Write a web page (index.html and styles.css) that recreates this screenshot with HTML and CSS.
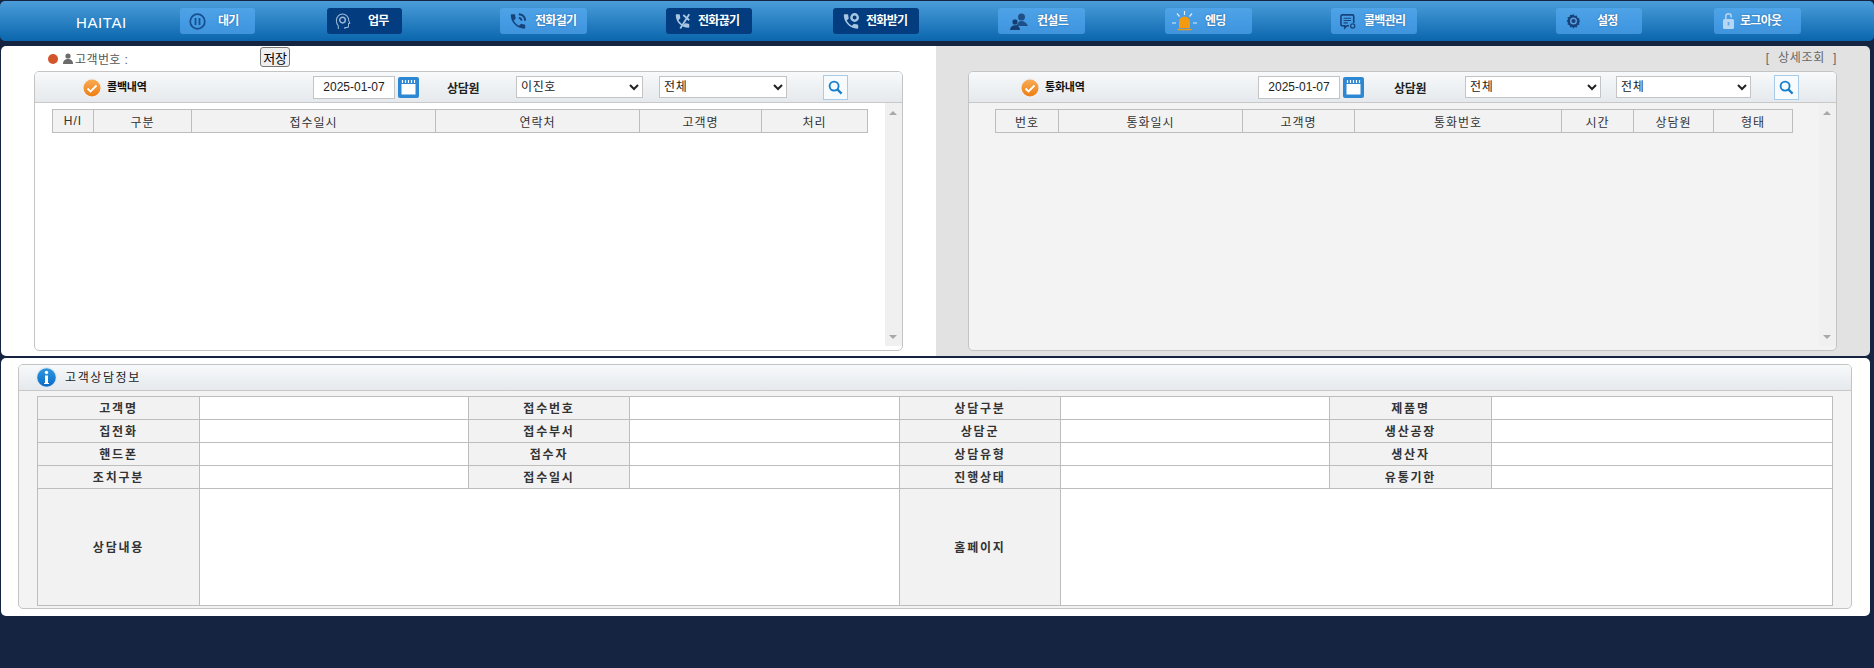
FILE: index.html
```html
<!DOCTYPE html>
<html lang="ko">
<head>
<meta charset="utf-8">
<title>HAITAI</title>
<link rel="stylesheet" href="styles.css">
</head>
<body>
<header class="topbar">
  <div class="brand">HAITAI</div>
  <nav class="nav">
    <a class="nb nb-wait">
      <svg class="ni i17" viewBox="0 0 17 17"><circle cx="8.500" cy="8.500" r="7.300" fill="none" stroke="#17508f" stroke-width="1.800"/><path d="M6.500 5v7M10.500 5v7" stroke="#17508f" stroke-width="1.800"/></svg>
      <span>대기</span>
    </a>
    <a class="nb nb-work on">
      <svg class="ni i16" viewBox="0 0 16 18"><path d="M3 17v-3.500C1.500 12 1 10.500 1 8c0-4 3-7 6.500-7S14 4 14 7.500c0 1 .8 2.300 1.200 3.200l-1.400.6V14c0 1-.7 1.400-1.600 1.400H10V17" fill="none" stroke="#9db9d6" stroke-width="1.100"/><circle cx="7.500" cy="7.500" r="3" fill="none" stroke="#9db9d6" stroke-width="1.500"/></svg>
      <span>업무</span>
    </a>
    <a class="nb nb-call">
      <svg class="ni i16" viewBox="2 2 20 20"><path fill="#17437d" d="M6.600 10.800c1.400 2.800 3.800 5.100 6.600 6.600l2.200-2.200c.3-.3.700-.4 1-.2 1.100.4 2.300.6 3.600.6.600 0 1 .4 1 1V20c0 .6-.4 1-1 1C10.600 21 3 13.400 3 4c0-.6.400-1 1-1h3.500c.6 0 1 .4 1 1 0 1.300.2 2.500.6 3.600.1.300 0 .7-.2 1z"/><path fill="none" stroke="#17437d" stroke-width="2.400" d="M13 3c4.500.3 7.700 3.500 8 8M13 7.500c2 .2 3.300 1.500 3.500 3.500"/></svg>
      <span>전화걸기</span>
    </a>
    <a class="nb nb-hang on">
      <svg class="ni i15" viewBox="2 2 20 20"><path fill="#a9c6e2" d="M6.600 10.800c1.400 2.800 3.800 5.100 6.600 6.600l2.200-2.200c.3-.3.700-.4 1-.2 1.100.4 2.300.6 3.600.6.600 0 1 .4 1 1V20c0 .6-.4 1-1 1C10.600 21 3 13.400 3 4c0-.6.400-1 1-1h3.500c.6 0 1 .4 1 1 0 1.300.2 2.500.6 3.600.1.300 0 .7-.2 1z"/><path stroke="#a9c6e2" stroke-width="2.400" d="M13 4l8 7M21 3L9 22"/></svg>
      <span>전화끊기</span>
    </a>
    <a class="nb nb-recv on">
      <svg class="ni i16" viewBox="2 2 20 20"><path fill="#a9c6e2" d="M6.600 10.800c1.400 2.800 3.800 5.100 6.600 6.600l2.200-2.200c.3-.3.700-.4 1-.2 1.100.4 2.300.6 3.600.6.600 0 1 .4 1 1V20c0 .6-.4 1-1 1C10.600 21 3 13.400 3 4c0-.6.400-1 1-1h3.500c.6 0 1 .4 1 1 0 1.300.2 2.500.6 3.600.1.300 0 .7-.2 1z"/><circle cx="16.500" cy="7" r="4" fill="none" stroke="#a9c6e2" stroke-width="3"/></svg>
      <span>전화받기</span>
    </a>
    <a class="nb nb-cons">
      <svg class="ni i20" viewBox="0 0 20 17"><circle cx="12.500" cy="4" r="3.500" fill="#1f4f87"/><path d="M7 13c.5-3 3-5 5.500-5s5.500 2 6.500 5z" fill="#1f4f87"/><circle cx="6" cy="9" r="3" fill="#153f73" stroke="#4a9fe2" stroke-width=".6"/><path d="M1 17c.2-3 2.200-4.800 5-4.800s5 1.800 5 4.800z" fill="#153f73"/></svg>
      <span>컨설트</span>
    </a>
    <a class="nb nb-end">
      <svg class="ni i25" viewBox="0 0 25 22"><path d="M7 18v-6a5.500 5.500 0 0 1 11 0v6z" fill="#f59a0e"/><path d="M5.500 19.500h14" stroke="#f59a0e" stroke-width="1.500"/><path d="M12.500 1v4M5 3.500l2.500 3M20 3.500l-2.500 3M0 13h4M21 13h4" stroke="#dcecf9" stroke-width="1.200"/></svg>
      <span>엔딩</span>
    </a>
    <a class="nb nb-cb">
      <svg class="ni i16" viewBox="0 0 17 16"><path d="M9.500 12.500H7.500L5 14.800v-2.300H2.300c-.8 0-1.300-.5-1.300-1.300V2.300C1 1.500 1.500 1 2.300 1h11c.8 0 1.300.5 1.300 1.300v7.200" fill="none" stroke="#17437d" stroke-width="1.700"/><path d="M3.800 4.500h8M3.800 7h8M3.800 9.500h4.500" stroke="#17437d" stroke-width="1.200"/><circle cx="13.500" cy="12.800" r="2.200" fill="none" stroke="#17437d" stroke-width="1.300"/></svg>
      <span>콜백관리</span>
    </a>
    <a class="nb nb-set">
      <svg class="ni i15" viewBox="0 0 16 16"><path d="M8 .6l1.200 2 2.300-.4.700 2.200 2.200.8-.5 2.300L15.400 8l-1.500 1.500.5 2.300-2.200.8-.7 2.200-2.300-.4-1.200 1.900-1.200-1.900-2.300.4-.7-2.200-2.200-.8.5-2.300L.6 8l1.500-1.500-.5-2.300 2.200-.8.700-2.200 2.300.4z" fill="#17437d"/><circle cx="8" cy="8" r="3" fill="none" stroke="#5b9fdc" stroke-width="1.500"/></svg>
      <span>설정</span>
    </a>
    <a class="nb nb-out">
      <svg class="ni i11" viewBox="0 0 11 16"><rect x="0" y="6" width="11" height="10" rx="1.500" fill="#b6d6f2"/><path d="M2.800 6.500V3.500a2.700 2.700 0 0 1 5.400 0V4.500" fill="none" stroke="#b6d6f2" stroke-width="1.500"/><rect x="4.700" y="9" width="1.600" height="3.500" fill="#5ea8e8"/></svg>
      <span>로그아웃</span>
    </a>
  </nav>
</header>

<main class="page">
  <div class="upper">
    <section class="pane pane-left">
      <div class="cust-row">
        <i class="dot"></i>
        <svg class="user" viewBox="0 0 10 11"><circle cx="5" cy="3" r="2.600" fill="#6b6b6b"/><path d="M0 11c0-3.500 2-5 5-5s5 1.500 5 5z" fill="#6b6b6b"/></svg>
        <span class="cust-label">고객번호 :</span>
        <button class="save" type="button">저장</button>
      </div>
      <div class="box box-left">
        <div class="box-head">
          <svg class="check check-l" viewBox="0 0 20 20"><defs><linearGradient id="og1" x1="0" y1="0" x2="0" y2="1"><stop offset="0" stop-color="#f8ac55"/><stop offset="1" stop-color="#ee7d12"/></linearGradient></defs><circle cx="10" cy="10" r="10" fill="#eef0f2"/><circle cx="10" cy="10" r="8.500" fill="url(#og1)"/><path d="M5.500 10.500l3 3 6-6" fill="none" stroke="#fff" stroke-width="1.800"/></svg>
          <span class="box-title tl">콜백내역</span>
          <input class="date" type="text" value="2025-01-07">
          <svg class="cal" viewBox="0 0 21 21"><rect width="21" height="21" rx="2" fill="#2d87d3"/><rect x="3.500" y="7" width="14" height="10.500" fill="#fff"/><path d="M4.500 3v3M7.500 3v3M10.500 3v3M13.500 3v3M16.500 3v3" stroke="#fff" stroke-width="1.200"/></svg>
          <span class="agent al">상담원</span>
          <select class="sel sel-l1"><option>이진호</option></select>
          <select class="sel sel-l2"><option>전체</option></select>
          <button class="search sr-l" type="button"><svg viewBox="0 0 16 16"><circle cx="6.500" cy="6.500" r="4.800" fill="none" stroke="#1780cc" stroke-width="2"/><path d="M10 10l4.500 4.500" stroke="#1780cc" stroke-width="2.400"/></svg></button>
        </div>
        <div class="box-body">
          <div class="tbl-wrap wrap-left">
            <table class="grid grid-left">
              <colgroup><col class="c41"><col class="c98"><col class="c244"><col class="c204"><col class="c122"><col class="c106"></colgroup>
              <thead><tr><th>H/I</th><th>구분</th><th>접수일시</th><th>연락처</th><th>고객명</th><th>처리</th></tr></thead>
            </table>
          </div>
          <div class="scroll"><i class="up"></i><i class="down"></i></div>
        </div>
      </div>
    </section>

    <section class="pane pane-right">
      <div class="detail-row">[ &nbsp;상세조회 &nbsp;]</div>
      <div class="box box-right">
        <div class="box-head">
          <svg class="check check-r" viewBox="0 0 20 20"><defs><linearGradient id="og2" x1="0" y1="0" x2="0" y2="1"><stop offset="0" stop-color="#f8ac55"/><stop offset="1" stop-color="#ee7d12"/></linearGradient></defs><circle cx="10" cy="10" r="10" fill="#eef0f2"/><circle cx="10" cy="10" r="8.500" fill="url(#og2)"/><path d="M5.500 10.500l3 3 6-6" fill="none" stroke="#fff" stroke-width="1.800"/></svg>
          <span class="box-title tr">통화내역</span>
          <input class="date" type="text" value="2025-01-07">
          <svg class="cal" viewBox="0 0 21 21"><rect width="21" height="21" rx="2" fill="#2d87d3"/><rect x="3.500" y="7" width="14" height="10.500" fill="#fff"/><path d="M4.500 3v3M7.500 3v3M10.500 3v3M13.500 3v3M16.500 3v3" stroke="#fff" stroke-width="1.200"/></svg>
          <span class="agent ar">상담원</span>
          <select class="sel sel-r1"><option>전체</option></select>
          <select class="sel sel-r2"><option>전체</option></select>
          <button class="search sr-r" type="button"><svg viewBox="0 0 16 16"><circle cx="6.500" cy="6.500" r="4.800" fill="none" stroke="#1780cc" stroke-width="2"/><path d="M10 10l4.500 4.500" stroke="#1780cc" stroke-width="2.400"/></svg></button>
        </div>
        <div class="box-body">
          <div class="tbl-wrap wrap-right">
            <table class="grid grid-right">
              <colgroup><col class="c63"><col class="c184"><col class="c112"><col class="c207"><col class="c72"><col class="c80"><col class="c79"></colgroup>
              <thead><tr><th>번호</th><th>통화일시</th><th>고객명</th><th>통화번호</th><th>시간</th><th>상담원</th><th>형태</th></tr></thead>
            </table>
          </div>
          <div class="scroll"><i class="up"></i><i class="down"></i></div>
        </div>
      </div>
    </section>
  </div>

  <section class="lower">
    <div class="info-box">
      <div class="info-head">
        <svg class="info-ic" viewBox="0 0 21 21"><defs><linearGradient id="bl1" x1="0" y1="0" x2="0" y2="1"><stop offset="0" stop-color="#2f97e2"/><stop offset="1" stop-color="#0a6cc4"/></linearGradient></defs><circle cx="10.500" cy="10.500" r="10.500" fill="#e0e9f0"/><circle cx="10.500" cy="10.500" r="9.300" fill="url(#bl1)"/><circle cx="10.500" cy="5.500" r="1.700" fill="#fff"/><path d="M9 8.500h3v7.500h1v1H8v-1h1z" fill="#fff"/></svg>
        <span class="info-title">고객상담정보</span>
      </div>
      <table class="form">
        <colgroup><col class="f162"><col class="f269"><col class="f161"><col class="f270"><col class="f161"><col class="f269"><col class="f162"><col class="f341"></colgroup>
        <tbody>
          <tr><th>고객명</th><td></td><th>접수번호</th><td></td><th>상담구분</th><td></td><th>제품명</th><td></td></tr>
          <tr><th>집전화</th><td></td><th>접수부서</th><td></td><th>상담군</th><td></td><th>생산공장</th><td></td></tr>
          <tr><th>핸드폰</th><td></td><th>접수자</th><td></td><th>상담유형</th><td></td><th>생산자</th><td></td></tr>
          <tr><th>조치구분</th><td></td><th>접수일시</th><td></td><th>진행상태</th><td></td><th>유통기한</th><td></td></tr>
          <tr class="tall"><th>상담내용</th><td colspan="3"></td><th>홈페이지</th><td colspan="3"></td></tr>
        </tbody>
      </table>
    </div>
  </section>
</main>
</body>
</html>
```

FILE: styles.css
```css
* { box-sizing: border-box; }
html, body { height: 668px; overflow: hidden; }
body {
  margin: 0;
  background: #152440;
  font-family: "Liberation Sans", "Noto Sans CJK KR", sans-serif;
  font-size: 12px;
  color: #333;
}

/* top bar */
.topbar {
  display: flex;
  align-items: flex-start;
  height: 40px;
  margin: 1px 0 5px;
  border-radius: 5px;
  background: linear-gradient(#4b9dd9, #0a66ad);
}
.brand {
  width: 180px;
  padding: 13px 0 0 76px;
  color: #fff;
  font-size: 15px;
  line-height: 17px;
  letter-spacing: .6px;
}
.nav { display: flex; padding-top: 7px; }
.nb {
  display: flex;
  align-items: center;
  width: 86px;
  height: 26px;
  border-radius: 3px;
  background: linear-gradient(#4fa3e6, #449be3 60%, #3f93db);
  color: #fff;
  font-size: 12px;
  font-weight: 700;
  letter-spacing: -.7px;
  line-height: 14px;
  text-shadow: 0 0 2px rgba(0, 40, 90, .5);
  white-space: nowrap;
}
.nb.on { background: #033d80; }
.ni { flex: none; display: block; }
.i11 { width: 11px; height: 16px; }
.i15 { width: 15px; height: 16px; }
.i16 { width: 16px; height: 17px; }
.i17 { width: 17px; height: 17px; }
.i20 { width: 20px; height: 17px; }
.i25 { width: 25px; height: 22px; }
.nb-wait { width: 75px; padding-left: 9px; }
.nb-wait span { margin-left: 12px; }
.nb-work { width: 75px; margin-left: 72px; padding-left: 8px; }
.nb-work span { margin-left: 17px; }
.nb-call { width: 87px; margin-left: 98px; padding-left: 10px; }
.nb-call span { margin-left: 9px; }
.nb-hang { margin-left: 79px; padding-left: 9px; }
.nb-hang span { margin-left: 8px; }
.nb-recv { margin-left: 81px; padding-left: 10px; }
.nb-recv span { margin-left: 7px; }
.nb-cons { width: 87px; margin-left: 79px; padding-left: 11px; }
.nb-cons span { margin-left: 8px; }
.nb-end { width: 87px; margin-left: 80px; padding-left: 7px; }
.nb-end span { margin-left: 8px; }
.nb-cb { margin-left: 79px; padding-left: 9px; }
.nb-cb span { margin-left: 8px; }
.nb-set { margin-left: 139px; padding-left: 10px; }
.nb-set span { margin-left: 16px; }
.nb-out { width: 87px; margin-left: 72px; padding-left: 9px; }
.nb-out span { margin-left: 6px; }

/* page */
.page { margin-left: 1px; width: 1869px; }
.upper { display: flex; height: 310px; }
.pane { height: 310px; }
.pane-left {
  width: 935px;
  padding-left: 33px;
  background: #fff;
  border-radius: 5px 0 0 5px;
}
.pane-right {
  width: 934px;
  padding-left: 32px;
  background: #e2e2e2;
  border-radius: 0 5px 5px 0;
}
.cust-row {
  display: flex;
  align-items: center;
  height: 25px;
  padding-left: 14px;
}
.dot {
  width: 10px;
  height: 10px;
  border-radius: 50%;
  background: #d4552a;
}
.user { width: 10px; height: 11px; margin-left: 5px; }
.cust-label {
  width: 185px;
  margin-left: 2px;
  color: #555;
  font-size: 12px;
  letter-spacing: .4px;
}
.save {
  width: 30px;
  height: 20px;
  margin: 0 0 3px;
  padding: 0;
  border: 1px solid #767676;
  border-radius: 3px;
  background: #efefef;
  color: #000;
  font: 13px "Liberation Sans", "Noto Sans CJK KR", sans-serif;
  letter-spacing: -.3px;
}
.detail-row {
  width: 869px;
  height: 25px;
  text-align: right;
  color: #666;
  font-size: 12px;
  line-height: 25px;
  letter-spacing: .7px;
}

/* panels */
.box {
  height: 280px;
  border: 1px solid #c4c4c4;
  border-radius: 5px;
  overflow: hidden;
}
.box-left { width: 869px; background: #fff; }
.box-right { width: 869px; background: #f3f3f3; }
.box-head {
  display: flex;
  align-items: center;
  height: 31px;
  border-bottom: 1px solid #c8c8c8;
  background: linear-gradient(#f7f9fa, #e5e9ed);
}
.check { width: 20px; height: 20px; flex: none; margin-top: 1px; }
.check-l { margin-left: 47px; }
.check-r { margin-left: 51px; }
.box-title {
  margin-left: 5px;
  margin-bottom: 3px;
  color: #111;
  font-size: 11px;
  font-weight: 700;
  letter-spacing: -.2px;
}
.tl { width: 206px; }
.tr { width: 213px; }
.date {
  width: 82px;
  height: 23px;
  padding: 0;
  border: 1px solid #c4c4c4;
  background: #fff;
  color: #222;
  font: 12px "Liberation Sans", sans-serif;
  text-align: center;
}
.cal { width: 21px; height: 21px; margin-left: 3px; flex: none; }
.agent { width: 34px; font-size: 12px; font-weight: 700; letter-spacing: -.3px; color: #222; white-space: nowrap; }
.al { margin-left: 28px; }
.ar { margin-left: 30px; }
.sel {
  height: 22px;
  padding: 0;
  border: 1px solid #c4c4c4;
  border-radius: 0;
  background-color: #fff;
  color: #222;
  font: 12px "Liberation Sans", "Noto Sans CJK KR", sans-serif;
  letter-spacing: .6px;
}
.sel-l1 { width: 127px; margin-left: 35px; }
.sel-l2 { width: 128px; margin-left: 16px; }
.sel-r1 { width: 136px; margin-left: 37px; }
.sel-r2 { width: 135px; margin-left: 15px; }
.search {
  width: 25px;
  height: 25px;
  padding: 4px;
  border: 1px solid #a8cbe8;
  background: #f8fbfd;
}
.search svg { display: block; width: 15px; height: 15px; }
.sr-l { margin-left: 36px; }
.sr-r { margin-left: 23px; }
.box-body { display: flex; height: 247px; }
.tbl-wrap { padding-top: 6px; }
.wrap-left { width: 850px; padding-left: 17px; }
.wrap-right { width: 850px; padding-left: 26px; }
.scroll {
  position: relative;
  width: 17px;
  height: 243px;
  background: #f0f0f0;
}
.up, .down {
  position: absolute;
  left: 4px;
  width: 0;
  height: 0;
  border-left: 4px solid transparent;
  border-right: 4px solid transparent;
}
.up { top: 8px; border-bottom: 4px solid #a8a8a8; }
.down { bottom: 7px; border-top: 4px solid #a8a8a8; }

/* list tables */
.grid { border-collapse: collapse; table-layout: fixed; }
.grid-left { width: 815px; }
.grid-right { width: 797px; }
.grid th {
  height: 23px;
  padding: 0;
  border: 1px solid #bdbdbd;
  background: #f2f2f2;
  color: #333;
  font-size: 12px;
  font-weight: 400;
  letter-spacing: 1px;
  text-align: center;
}
.c41 { width: 41px; }
.c98 { width: 98px; }
.c244 { width: 244px; }
.c204 { width: 204px; }
.c122 { width: 122px; }
.c106 { width: 106px; }
.c63 { width: 63px; }
.c184 { width: 184px; }
.c112 { width: 112px; }
.c207 { width: 207px; }
.c72 { width: 72px; }
.c80 { width: 80px; }
.c79 { width: 79px; }

/* lower form */
.lower {
  height: 258px;
  margin-top: 2px;
  padding: 6px 0 0 17px;
  background: #fff;
  border-radius: 5px;
}
.info-box {
  width: 1834px;
  height: 245px;
  border: 1px solid #c4c4c4;
  border-radius: 5px;
  background: #f3f3f3;
  overflow: hidden;
}
.info-head {
  display: flex;
  align-items: center;
  height: 26px;
  padding-left: 17px;
  border-bottom: 1px solid #c8c8c8;
  background: linear-gradient(#f7f9fa, #e5e9ed);
}
.info-ic { width: 21px; height: 21px; flex: none; }
.info-title { margin: 0 0 2px 8px; color: #222; font-size: 12px; letter-spacing: 1.6px; }
.form {
  width: 1795px;
  margin: 5px 0 0 18px;
  border-collapse: collapse;
  table-layout: fixed;
}
.form th, .form td {
  height: 23px;
  padding: 0;
  border: 1px solid #bdbdbd;
}
.form td { background: #fff; }
.form th {
  padding-bottom: 2px;
  background: #f2f2f2;
  color: #333;
  font-size: 12px;
  font-weight: 700;
  letter-spacing: 1.8px;
  text-align: center;
}
.form .tall th, .form .tall td { height: 117px; }
.f161 { width: 161px; }
.f162 { width: 162px; }
.f269 { width: 269px; }
.f270 { width: 270px; }
.f341 { width: 341px; }
```
